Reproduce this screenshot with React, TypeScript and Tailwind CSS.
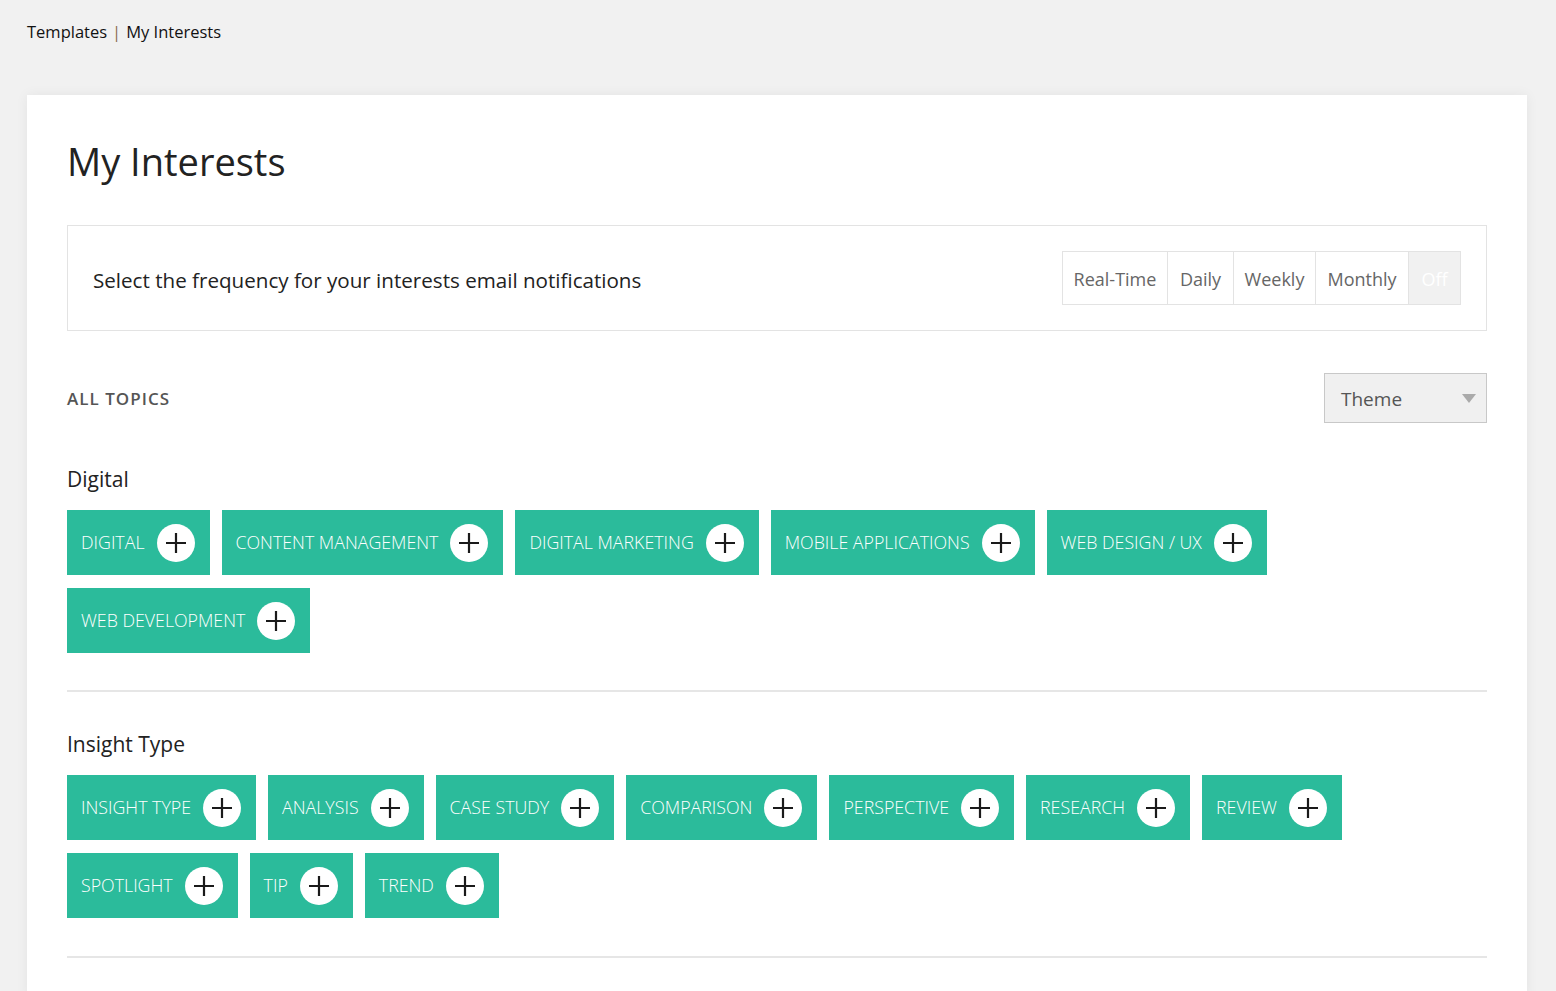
const digital = [
  "Digital",
  "Content Management",
  "Digital Marketing",
  "Mobile Applications",
  "Web Design / UX",
  "Web Development",
];

const insight = [
  "Insight Type",
  "Analysis",
  "Case Study",
  "Comparison",
  "Perspective",
  "Research",
  "Review",
  "Spotlight",
  "Tip",
  "Trend",
];

const freqs = [
  { label: "Real-Time", w: "w-[105px]" },
  { label: "Daily", w: "w-[66px]" },
  { label: "Weekly", w: "w-[82px]" },
  { label: "Monthly", w: "w-[93px]" },
];

function PlusCircle() {
  return (
    <span className="flex h-[38px] w-[38px] items-center justify-center rounded-full bg-white">
      <svg width="22" height="22" viewBox="0 0 22 22">
        <path d="M11 1v20M1 11h20" stroke="#1a1a1a" strokeWidth="2.2" />
      </svg>
    </span>
  );
}

function Tag({ label }: { label: string }) {
  return (
    <button className="flex h-[65px] items-center gap-3 bg-[#2bbb9b] pl-[14px] pr-[15px] text-[17.8px] font-light uppercase text-white">
      <span>{label}</span>
      <PlusCircle />
    </button>
  );
}

function Group({ title, items }: { title: string; items: string[] }) {
  return (
    <section>
      <h2 className="text-[21px] leading-[28px] text-[#222]">{title}</h2>
      <div className="mt-[17px] flex flex-wrap gap-x-3 gap-y-[13px]">
        {items.map((t) => (
          <Tag key={t} label={t} />
        ))}
      </div>
    </section>
  );
}

export default function App() {
  return (
    <div
      className="min-h-screen bg-[#f1f1f1] pb-10 pl-[27px] pr-[29px]"
      style={{ fontFamily: '"Open Sans", "Noto Sans", sans-serif' }}
    >
      <nav className="flex items-center pt-[20px] text-[16.5px] leading-[24px] text-[#111]">
        <span>Templates</span>
        <span className="mx-[5px] text-[#8a6a4a]">|</span>
        <span>My Interests</span>
      </nav>

      <main className="mt-[51px] bg-white px-10 pb-10 pt-[42px] shadow-[0_0_12px_rgba(0,0,0,0.06)]">
        <h1 className="text-[38px] leading-[48px] text-[#222]">My Interests</h1>

        <div className="mt-[40px] flex h-[106px] items-center justify-between border border-[#e3e3e3] pl-[25px] pr-[25px]">
          <p className="pt-[5px] text-[20.6px] text-[#222]">
            Select the frequency for your interests email notifications
          </p>
          <div className="flex h-[54px] border border-[#e3e3e3] text-[18px] text-[#666]">
            {freqs.map((f) => (
              <button
                key={f.label}
                className={`${f.w} flex items-center justify-center border-r border-[#e3e3e3] pt-[2px]`}
              >
                {f.label}
              </button>
            ))}
            <button className="flex w-[51px] items-center justify-center bg-[#f1f1f1] pt-[2px] text-white">
              Off
            </button>
          </div>
        </div>

        <div className="mt-[42px] flex items-center justify-between">
          <h3 className="pt-[2px] text-[17px] font-semibold tracking-[0.06em] text-[#555]">
            ALL TOPICS
          </h3>
          <div className="flex h-[50px] w-[163px] items-center justify-between border border-[#c8c8c8] bg-[#f0f0f0] pl-[16px] pr-[10px] text-[19px] text-[#555]">
            <span className="pt-[3px]">Theme</span>
            <svg width="14" height="9" viewBox="0 0 14 9">
              <path d="M0 0h14L7 9z" fill="#aaa" />
            </svg>
          </div>
        </div>

        <div className="mt-[42px]">
          <Group title="Digital" items={digital} />
        </div>

        <hr className="mt-[37px] border-t-2 border-[#e6e6e6]" />

        <div className="mt-[38px]">
          <Group title="Insight Type" items={insight} />
        </div>

        <hr className="mt-[38px] border-t-2 border-[#e6e6e6]" />
      </main>
    </div>
  );
}
